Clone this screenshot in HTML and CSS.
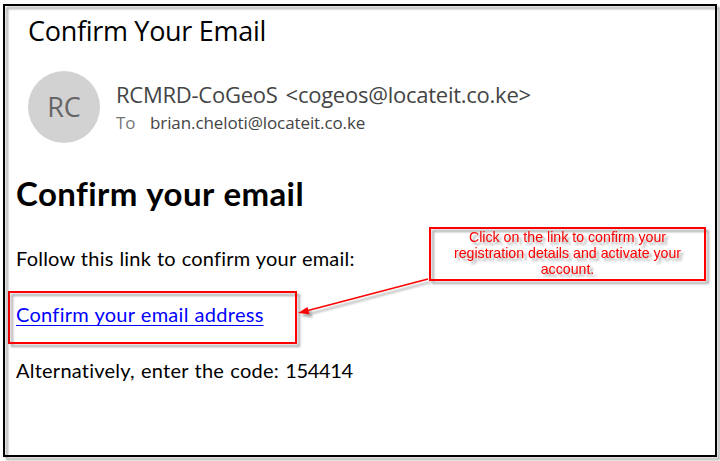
FILE: index.html
```html
<!DOCTYPE html>
<html lang="en">
<head>
<meta charset="utf-8">
<title>Confirm Your Email</title>
<link rel="stylesheet" href="styles.css">
</head>
<body>
<main class="mail">
  <h1 class="subject"><span>Confirm Your Email</span></h1>
  <header class="sender">
    <div class="avatar">RC</div>
    <div class="meta">
      <div class="from"><span>RCMRD-CoGeoS &lt;cogeos@locateit.co.ke&gt;</span></div>
      <div class="to"><span class="label">To</span><span class="address">brian.cheloti@locateit.co.ke</span></div>
    </div>
  </header>
  <section class="content">
    <h2><span>Confirm your email</span></h2>
    <p class="follow"><span>Follow this link to confirm your email:</span></p>
    <p class="link"><a href="#">Confirm your email address</a></p>
    <p class="code">Alternatively, enter the code: <span class="digits">154414</span></p>
  </section>
</main>
<div class="highlight"></div>
<svg class="arrow" width="720" height="461" viewBox="0 0 720 461">
  <path d="M428 279 L308 310.5" fill="none" stroke="#f00" stroke-width="1.4"/>
  <path d="M298 313 L307.5 307 L309.5 314.2 Z" fill="#f00"/>
</svg>
<div class="callout">Click on the link to confirm your<br>registration details and activate your<br>account.</div>
</body>
</html>
```

FILE: styles.css
```css
* { box-sizing: border-box; }
body { margin: 0; width: 720px; height: 461px; overflow: hidden; background: #fff; position: relative; }
h1, h2, p { margin: 0; font-weight: 400; }
body::after {
  content: "";
  box-sizing: border-box;
  position: absolute;
  left: 3px; top: 4px; width: 714px; height: 453px;
  border: 2px solid #000;
  filter: drop-shadow(3px 3px 1px rgba(0, 0, 0, .35));
  pointer-events: none;
}
.mail { padding: 11px 16px 0; font-family: "Open Sans", sans-serif; white-space: nowrap; }
.subject { margin-left: 12px; height: 40px; line-height: 40px; font-size: 27px; letter-spacing: -.3px; color: #000; }
.sender { display: flex; gap: 16px; margin: 20px 0 0 12px; height: 72px; }
.avatar { width: 72px; height: 72px; border-radius: 50%; background: #d2d2d2; color: #666; font-size: 27px; line-height: 72px; text-align: center; }
.meta { padding-top: 7px; color: #444; }
.from { height: 32px; line-height: 32px; font-size: 22px; letter-spacing: -.25px; word-spacing: 2.5px; }
.to { display: flex; height: 26px; line-height: 26px; font-size: 17px; letter-spacing: -.1px; }
.label { width: 34px; color: #777; }
.content { font-family: Lato, sans-serif; color: #000; font-variant-ligatures: none; }
.content h2 { margin-top: 27px; height: 46px; line-height: 46px; font-size: 33px; letter-spacing: .4px; word-spacing: 1px; font-weight: 700; }
.content p { height: 56px; line-height: 56px; font-size: 20px; letter-spacing: .22px; word-spacing: .5px; }
.content .follow { margin-top: 14px; }
.content .link { letter-spacing: .28px; }
.content .code { letter-spacing: .24px; word-spacing: .8px; }
.content .digits { letter-spacing: -.35px; }
.content a { color: #00f; text-underline-offset: 3px; text-decoration-thickness: 1px; text-decoration-skip-ink: none; }
.highlight {
  position: absolute; left: 8px; top: 291px; width: 289px; height: 53px;
  border: 2px solid #f00; filter: drop-shadow(3px 3px 1px rgba(0, 0, 0, .35));
}
.arrow { position: absolute; left: 0; top: 0; filter: drop-shadow(3px 3px 1px rgba(0, 0, 0, .35)); }
.callout {
  position: absolute; left: 429px; top: 227px; width: 277px; height: 54px;
  border: 2px solid #f00; color: #f00; text-align: center; white-space: nowrap;
  font: 14.2px/16px "Liberation Sans", Arial, sans-serif;
  filter: drop-shadow(3px 3px 1px rgba(0, 0, 0, .35));
}
```
